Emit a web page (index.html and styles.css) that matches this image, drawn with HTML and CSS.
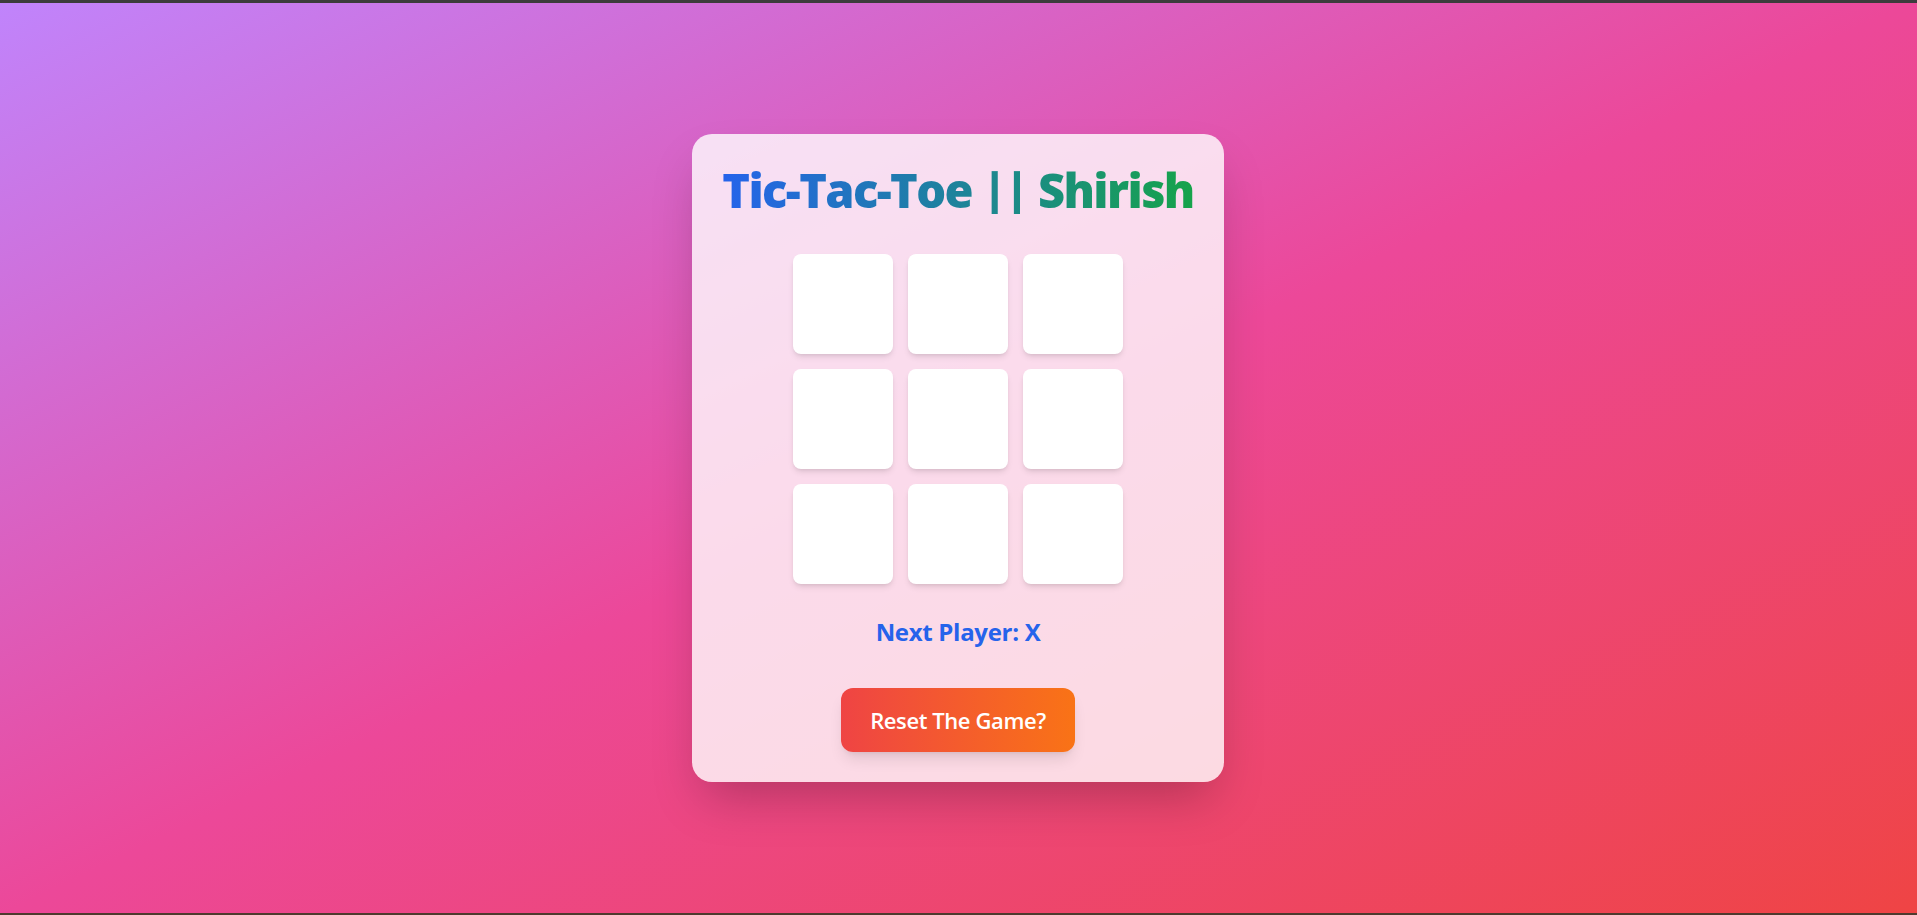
FILE: index.html
```html
<!DOCTYPE html>
<html lang="en">
<head>
<meta charset="UTF-8">
<title>Tic-Tac-Toe || Shirish</title>
<link rel="stylesheet" href="styles.css">
</head>
<body>
<div class="topline"></div>
<main class="page">
  <section class="card">
    <h1 class="title">Tic-Tac-Toe || Shirish</h1>
    <div class="board">
      <button class="cell"></button>
      <button class="cell"></button>
      <button class="cell"></button>
      <button class="cell"></button>
      <button class="cell"></button>
      <button class="cell"></button>
      <button class="cell"></button>
      <button class="cell"></button>
      <button class="cell"></button>
    </div>
    <p class="status">Next Player: X</p>
    <button class="reset">Reset The Game?</button>
  </section>
</main>
<div class="bottomline"></div>
</body>
</html>
```
FILE: styles.css
```css
* { box-sizing: border-box; }
html, body { margin: 0; padding: 0; height: 100%; }
body {
  display: flex;
  flex-direction: column;
  font-family: "Open Sans", "Noto Sans", sans-serif;
  background: linear-gradient(to bottom right, #c084fc, #ec4899, #ef4444);
}
.topline { height: 3px; background: #3c3c3c; flex: none; }
.bottomline { height: 2px; background: #4e3a2e; flex: none; }
.page {
  flex: 1;
  display: flex;
  align-items: center;
  justify-content: center;
}
.card {
  width: 532px;
  margin-right: 1px;
  padding: 32px 32px 30px;
  border-radius: 20px;
  background: rgba(255, 255, 255, 0.8);
  box-shadow: 0 25px 50px -12px rgba(0, 0, 0, 0.25);
  display: flex;
  flex-direction: column;
  align-items: center;
}
.title {
  margin: 0 0 40px;
  font-size: 47px;
  line-height: 48px;
  font-weight: 800;
  letter-spacing: -1.6px;
  white-space: nowrap;
  background: linear-gradient(to right, #2563eb, #16a34a);
  -webkit-background-clip: text;
  background-clip: text;
  color: transparent;
}
.board {
  display: grid;
  grid-template-columns: repeat(3, 100px);
  grid-auto-rows: 100px;
  gap: 15px;
}
.cell {
  border: none;
  padding: 0;
  background: #fff;
  border-radius: 8px;
  box-shadow: 0 4px 6px -1px rgba(0, 0, 0, 0.1), 0 2px 4px -2px rgba(0, 0, 0, 0.1);
}
.status {
  margin: 32px 0 0;
  font-size: 24px;
  line-height: 32px;
  font-weight: 700;
  color: #2563eb;
  letter-spacing: -0.3px;
}
.reset {
  margin-top: 40px;
  width: 234px;
  height: 64px;
  border: none;
  border-radius: 12px;
  font-family: "Open Sans", "Noto Sans", sans-serif;
  font-size: 22px;
  font-weight: 600;
  letter-spacing: -0.4px;
  color: #fff;
  background: linear-gradient(to right, #ef4444, #f97316);
  box-shadow: 0 10px 15px -3px rgba(0, 0, 0, 0.1), 0 4px 6px -4px rgba(0, 0, 0, 0.1);
}
```
